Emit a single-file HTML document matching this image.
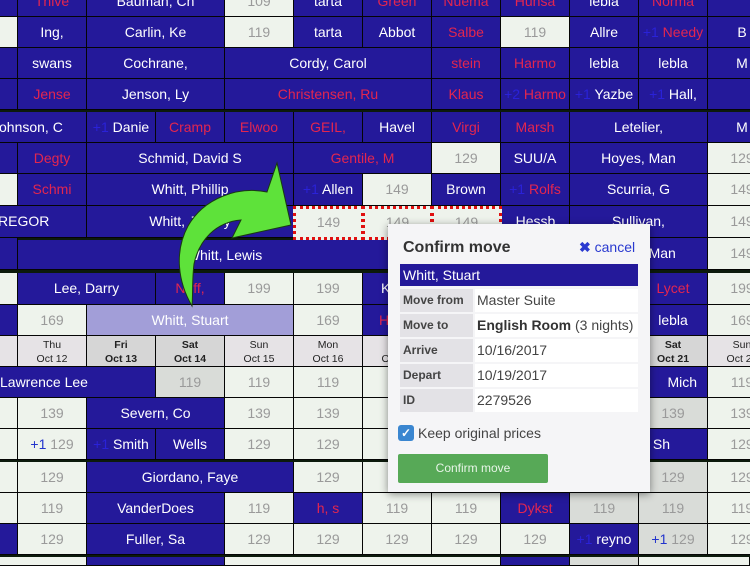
<!DOCTYPE html>
<html style="overflow:hidden;height:566px"><head><meta charset="utf-8"><style>
body{margin:0;width:750px;height:566px;overflow:hidden;background:#0c1a0c;position:relative;font-family:"Liberation Sans",Arial,sans-serif}
.c{position:absolute;height:31px;box-sizing:border-box;border-right:1px solid #050505;border-bottom:1px solid #050505;text-align:center;line-height:30px;font-size:14px;white-space:nowrap;overflow:hidden}
.b{background:#24199a;color:#fff}
.l{background:#eef3ec;color:#9a9a9a}
.g{background:#d9dcd8;color:#9a9a9a}
.p{background:#a29ed8;color:#fff}
.r{color:#e3264f}
.h{background:#e6e3e6;color:#222;font-size:10.5px;line-height:14px;padding-top:2px}
.hd{background:#d6d6d6}
.pl{color:#2a22d8}
.pp{color:#2233cc}
.sel{border:3px dotted #e01010;line-height:26px}
</style></head><body>
<!-- row0 -->
<div class="c b r" style="left:-51px;top:-14px;width:69px">m</div>
<div class="c b r" style="left:18px;top:-14px;width:69px">Thive</div>
<div class="c b" style="left:87px;top:-14px;width:138px">Bauman, Ch</div>
<div class="c l" style="left:225px;top:-14px;width:69px">109</div>
<div class="c b" style="left:294px;top:-14px;width:69px">tarta</div>
<div class="c b r" style="left:363px;top:-14px;width:69px">Green</div>
<div class="c b r" style="left:432px;top:-14px;width:69px">Nuema</div>
<div class="c b r" style="left:501px;top:-14px;width:69px">Hunsa</div>
<div class="c b" style="left:570px;top:-14px;width:69px">lebla</div>
<div class="c b r" style="left:639px;top:-14px;width:69px">Norma</div>
<div class="c b" style="left:708px;top:-14px;width:69px"></div>
<!-- row1 -->
<div class="c l" style="left:-51px;top:17px;width:69px"></div>
<div class="c b" style="left:18px;top:17px;width:69px">Ing,</div>
<div class="c b" style="left:87px;top:17px;width:138px">Carlin, Ke</div>
<div class="c l" style="left:225px;top:17px;width:69px">119</div>
<div class="c b" style="left:294px;top:17px;width:69px">tarta</div>
<div class="c b" style="left:363px;top:17px;width:69px">Abbot</div>
<div class="c b r" style="left:432px;top:17px;width:69px">Salbe</div>
<div class="c l" style="left:501px;top:17px;width:69px">119</div>
<div class="c b" style="left:570px;top:17px;width:69px">Allre</div>
<div class="c b r" style="left:639px;top:17px;width:69px"><span class="pl">+1</span> Needy</div>
<div class="c b" style="left:708px;top:17px;width:69px">B</div>
<!-- row2 -->
<div class="c b" style="left:-51px;top:48px;width:69px"></div>
<div class="c b" style="left:18px;top:48px;width:69px">swans</div>
<div class="c b" style="left:87px;top:48px;width:138px">Cochrane,</div>
<div class="c b" style="left:225px;top:48px;width:207px">Cordy, Carol</div>
<div class="c b r" style="left:432px;top:48px;width:69px">stein</div>
<div class="c b r" style="left:501px;top:48px;width:69px">Harmo</div>
<div class="c b" style="left:570px;top:48px;width:69px">lebla</div>
<div class="c b" style="left:639px;top:48px;width:69px">lebla</div>
<div class="c b" style="left:708px;top:48px;width:69px">M</div>
<!-- row3 -->
<div class="c b" style="left:-51px;top:79px;width:69px"></div>
<div class="c b r" style="left:18px;top:79px;width:69px">Jense</div>
<div class="c b" style="left:87px;top:79px;width:138px">Jenson, Ly</div>
<div class="c b r" style="left:225px;top:79px;width:207px">Christensen, Ru</div>
<div class="c b r" style="left:432px;top:79px;width:69px">Klaus</div>
<div class="c b r" style="left:501px;top:79px;width:69px"><span class="pl">+2</span> Harmo</div>
<div class="c b" style="left:570px;top:79px;width:69px"><span class="pl">+1</span> Yazbe</div>
<div class="c b" style="left:639px;top:79px;width:69px"><span class="pl">+1</span> Hall,</div>
<div class="c b" style="left:708px;top:79px;width:69px"></div>
<!-- row4 -->
<div class="c b" style="left:-51px;top:112px;width:138px;text-align:left;padding-left:43px">Johnson, C</div>
<div class="c b" style="left:87px;top:112px;width:69px"><span class="pl">+1</span> Danie</div>
<div class="c b r" style="left:156px;top:112px;width:69px">Cramp</div>
<div class="c b r" style="left:225px;top:112px;width:69px">Elwoo</div>
<div class="c b r" style="left:294px;top:112px;width:69px">GEIL,</div>
<div class="c b" style="left:363px;top:112px;width:69px">Havel</div>
<div class="c b r" style="left:432px;top:112px;width:69px">Virgi</div>
<div class="c b r" style="left:501px;top:112px;width:69px">Marsh</div>
<div class="c b" style="left:570px;top:112px;width:138px">Letelier,</div>
<div class="c b" style="left:708px;top:112px;width:69px">M</div>
<!-- row5 -->
<div class="c b" style="left:-51px;top:143px;width:69px"></div>
<div class="c b r" style="left:18px;top:143px;width:69px">Degty</div>
<div class="c b" style="left:87px;top:143px;width:207px">Schmid, David S</div>
<div class="c b r" style="left:294px;top:143px;width:138px">Gentile, M</div>
<div class="c l" style="left:432px;top:143px;width:69px">129</div>
<div class="c b" style="left:501px;top:143px;width:69px">SUU/A</div>
<div class="c b" style="left:570px;top:143px;width:138px">Hoyes, Man</div>
<div class="c l" style="left:708px;top:143px;width:69px">129</div>
<!-- row6 -->
<div class="c l" style="left:-51px;top:174px;width:69px;height:32px"></div>
<div class="c b r" style="left:18px;top:174px;width:69px;height:32px">Schmi</div>
<div class="c b" style="left:87px;top:174px;width:207px;height:32px">Whitt, Phillip</div>
<div class="c b" style="left:294px;top:174px;width:69px;height:32px"><span class="pl">+1</span> Allen</div>
<div class="c l" style="left:363px;top:174px;width:69px;height:32px">149</div>
<div class="c b" style="left:432px;top:174px;width:69px;height:32px">Brown</div>
<div class="c b r" style="left:501px;top:174px;width:69px;height:32px"><span class="pl">+1</span> Rolfs</div>
<div class="c b" style="left:570px;top:174px;width:138px;height:32px">Scurria, G</div>
<div class="c l" style="left:708px;top:174px;width:69px;height:32px">149</div>
<!-- row7 -->
<div class="c b" style="left:-51px;top:206px;width:138px;height:32px;text-align:left;padding-left:49px">REGOR</div>
<div class="c b" style="left:87px;top:206px;width:207px;height:32px">Whitt, Jeffrey</div>
<div class="c l sel" style="left:293px;top:206px;width:71px;height:34px">149</div>
<div class="c l sel" style="left:362px;top:206px;width:71px;height:34px">149</div>
<div class="c l sel" style="left:431px;top:206px;width:71px;height:34px">149</div>
<div class="c b" style="left:502px;top:206px;width:68px;height:32px">Hessb</div>
<div class="c b" style="left:570px;top:206px;width:138px;height:32px">Sullivan,</div>
<div class="c l" style="left:708px;top:206px;width:69px;height:32px">149</div>
<!-- row8 -->
<div class="c b" style="left:-51px;top:238px;width:69px;height:32px"></div>
<div class="c b" style="left:18px;top:240px;width:414px;height:30px">Whitt, Lewis</div>
<div class="c b" style="left:432px;top:240px;width:138px;height:30px"></div>
<div class="c b" style="left:570px;top:238px;width:138px;height:32px">Hoyes, Man</div>
<div class="c l" style="left:708px;top:238px;width:69px;height:32px">149</div>
<!-- row9 -->
<div class="c l" style="left:-51px;top:273px;width:69px;height:32px"></div>
<div class="c b" style="left:18px;top:273px;width:138px;height:32px">Lee, Darry</div>
<div class="c b r" style="left:156px;top:273px;width:69px;height:32px">Neff,</div>
<div class="c l" style="left:225px;top:273px;width:69px;height:32px">199</div>
<div class="c l" style="left:294px;top:273px;width:69px;height:32px">199</div>
<div class="c b" style="left:363px;top:273px;width:69px;height:32px;text-align:left;padding-left:18px">K</div>
<div class="c b" style="left:432px;top:273px;width:207px;height:32px"></div>
<div class="c b r" style="left:639px;top:273px;width:69px;height:32px">Lycet</div>
<div class="c l" style="left:708px;top:273px;width:69px;height:32px">199</div>
<!-- row10 -->
<div class="c b" style="left:-51px;top:305px;width:69px"></div>
<div class="c l" style="left:18px;top:305px;width:69px">169</div>
<div class="c p" style="left:87px;top:305px;width:207px">Whitt, Stuart</div>
<div class="c l" style="left:294px;top:305px;width:69px">169</div>
<div class="c b r" style="left:363px;top:305px;width:69px;text-align:left;padding-left:16px">H</div>
<div class="c b" style="left:432px;top:305px;width:207px"></div>
<div class="c b" style="left:639px;top:305px;width:69px">lebla</div>
<div class="c l" style="left:708px;top:305px;width:69px">169</div>
<!-- header -->
<div class="c h" style="left:-51px;top:336px;width:69px"></div>
<div class="c h" style="left:18px;top:336px;width:69px">Thu<br>Oct 12</div>
<div class="c h hd" style="left:87px;top:336px;width:69px"><b>Fri<br>Oct 13</b></div>
<div class="c h hd" style="left:156px;top:336px;width:69px"><b>Sat<br>Oct 14</b></div>
<div class="c h" style="left:225px;top:336px;width:69px">Sun<br>Oct 15</div>
<div class="c h" style="left:294px;top:336px;width:69px">Mon<br>Oct 16</div>
<div class="c h" style="left:363px;top:336px;width:69px">Tue<br>Oct 17</div>
<div class="c h" style="left:432px;top:336px;width:69px">Wed<br>Oct 18</div>
<div class="c h" style="left:501px;top:336px;width:69px">Thu<br>Oct 19</div>
<div class="c h hd" style="left:570px;top:336px;width:69px"><b>Fri<br>Oct 20</b></div>
<div class="c h hd" style="left:639px;top:336px;width:69px"><b>Sat<br>Oct 21</b></div>
<div class="c h" style="left:708px;top:336px;width:69px">Sun<br>Oct 22</div>
<!-- row11 -->
<div class="c b" style="left:-51px;top:367px;width:207px;text-align:left;padding-left:51px">Lawrence Lee</div>
<div class="c g" style="left:156px;top:367px;width:69px">119</div>
<div class="c l" style="left:225px;top:367px;width:69px">119</div>
<div class="c l" style="left:294px;top:367px;width:69px">119</div>
<div class="c l" style="left:363px;top:367px;width:207px">119</div>
<div class="c b" style="left:570px;top:367px;width:138px;text-align:right;padding-right:10px">Mich</div>
<div class="c l" style="left:708px;top:367px;width:69px">119</div>
<!-- row12 -->
<div class="c l" style="left:-51px;top:398px;width:69px"></div>
<div class="c l" style="left:18px;top:398px;width:69px">139</div>
<div class="c b" style="left:87px;top:398px;width:138px">Severn, Co</div>
<div class="c l" style="left:225px;top:398px;width:69px">139</div>
<div class="c l" style="left:294px;top:398px;width:69px">139</div>
<div class="c l" style="left:363px;top:398px;width:276px"></div>
<div class="c g" style="left:639px;top:398px;width:69px">139</div>
<div class="c l" style="left:708px;top:398px;width:69px">139</div>
<!-- row13 -->
<div class="c l" style="left:-51px;top:429px;width:69px"></div>
<div class="c l" style="left:18px;top:429px;width:69px"><span class="pp">+1</span> 129</div>
<div class="c b" style="left:87px;top:429px;width:69px"><span class="pl">+1</span> Smith</div>
<div class="c b" style="left:156px;top:429px;width:69px">Wells</div>
<div class="c l" style="left:225px;top:429px;width:69px">129</div>
<div class="c l" style="left:294px;top:429px;width:69px">129</div>
<div class="c l" style="left:363px;top:429px;width:207px"></div>
<div class="c b" style="left:570px;top:429px;width:138px;text-align:right;padding-right:37px">Sh</div>
<div class="c l" style="left:708px;top:429px;width:69px">129</div>
<!-- row14 -->
<div class="c l" style="left:-51px;top:462px;width:69px"></div>
<div class="c l" style="left:18px;top:462px;width:69px">129</div>
<div class="c b" style="left:87px;top:462px;width:207px">Giordano, Faye</div>
<div class="c l" style="left:294px;top:462px;width:69px">129</div>
<div class="c l" style="left:363px;top:462px;width:276px"></div>
<div class="c g" style="left:639px;top:462px;width:69px">129</div>
<div class="c l" style="left:708px;top:462px;width:69px">129</div>
<!-- row15 -->
<div class="c l" style="left:-51px;top:493px;width:69px"></div>
<div class="c l" style="left:18px;top:493px;width:69px">119</div>
<div class="c b" style="left:87px;top:493px;width:138px">VanderDoes</div>
<div class="c l" style="left:225px;top:493px;width:69px">119</div>
<div class="c b r" style="left:294px;top:493px;width:69px">h, s</div>
<div class="c l" style="left:363px;top:493px;width:69px">119</div>
<div class="c l" style="left:432px;top:493px;width:69px">119</div>
<div class="c b r" style="left:501px;top:493px;width:69px">Dykst</div>
<div class="c g" style="left:570px;top:493px;width:69px">119</div>
<div class="c g" style="left:639px;top:493px;width:69px">119</div>
<div class="c l" style="left:708px;top:493px;width:69px">119</div>
<!-- row16 -->
<div class="c b" style="left:-51px;top:524px;width:69px"></div>
<div class="c l" style="left:18px;top:524px;width:69px">129</div>
<div class="c b" style="left:87px;top:524px;width:138px">Fuller, Sa</div>
<div class="c l" style="left:225px;top:524px;width:69px">129</div>
<div class="c l" style="left:294px;top:524px;width:69px">129</div>
<div class="c l" style="left:363px;top:524px;width:69px">129</div>
<div class="c l" style="left:432px;top:524px;width:69px">129</div>
<div class="c l" style="left:501px;top:524px;width:69px">129</div>
<div class="c b" style="left:570px;top:524px;width:69px"><span class="pl">+1</span> reyno</div>
<div class="c g" style="left:639px;top:524px;width:69px"><span class="pp">+1</span> 129</div>
<div class="c l" style="left:708px;top:524px;width:69px">129</div>
<!-- row17 -->
<div class="c l" style="left:-51px;top:557px;width:138px;height:9px"></div>
<div class="c b" style="left:87px;top:557px;width:138px;height:9px"></div>
<div class="c l" style="left:225px;top:557px;width:276px;height:9px"></div>
<div class="c b" style="left:501px;top:557px;width:69px;height:9px"></div>
<div class="c g" style="left:570px;top:557px;width:69px;height:9px"></div>
<div class="c l" style="left:639px;top:557px;width:111px;height:9px"></div>

<!-- arrow -->
<svg style="position:absolute;left:0;top:0" width="750" height="566">
<path d="M192,306 C178,282 174,252 188,226 C204,198 238,186 267,192 L277,163 L291,225 L232,238 L241,220 C216,222 199,240 194,264 C192,280 193,295 192,306 Z" fill="#5ee23a" stroke="#1a3a10" stroke-width="1"/>
</svg>

<!-- popup -->
<div style="position:absolute;left:388px;top:224px;width:262px;height:268px;background:#f5f5f7;box-shadow:0 2px 8px rgba(0,0,0,.45);font-family:'Liberation Sans',Arial,sans-serif">
 <div style="position:absolute;left:15px;top:15px;font-size:16px;font-weight:bold;color:#333">Confirm move</div>
 <div style="position:absolute;left:191px;top:15px;font-size:14px;color:#2a3ad0"><b>✖</b> cancel</div>
 <div style="position:absolute;left:12px;top:40px;width:238px;height:22px;background:#24199a;color:#fff;font-size:14px;line-height:22px;padding-left:3px;box-sizing:border-box">Whitt, Stuart</div>
 <div style="position:absolute;left:12px;top:65px;width:238px;font-size:14px">
  <div style="display:flex;height:25px"><div style="width:70px;background:#e3e2e6;font-weight:bold;color:#444;font-size:12px;line-height:23px;padding-left:3px;margin-right:2px;margin-bottom:2px">Move from</div><div style="flex:1;background:#fff;color:#444;line-height:23px;padding-left:2px;margin-bottom:2px">Master Suite</div></div>
  <div style="display:flex;height:25px"><div style="width:70px;background:#e3e2e6;font-weight:bold;color:#444;font-size:12px;line-height:23px;padding-left:3px;margin-right:2px;margin-bottom:2px">Move to</div><div style="flex:1;background:#fff;color:#444;line-height:23px;padding-left:2px;margin-bottom:2px;white-space:nowrap"><b style="color:#333">English Room</b> (3 nights)</div></div>
  <div style="display:flex;height:25px"><div style="width:70px;background:#e3e2e6;font-weight:bold;color:#444;font-size:12px;line-height:23px;padding-left:3px;margin-right:2px;margin-bottom:2px">Arrive</div><div style="flex:1;background:#fff;color:#444;line-height:23px;padding-left:2px;margin-bottom:2px">10/16/2017</div></div>
  <div style="display:flex;height:25px"><div style="width:70px;background:#e3e2e6;font-weight:bold;color:#444;font-size:12px;line-height:23px;padding-left:3px;margin-right:2px;margin-bottom:2px">Depart</div><div style="flex:1;background:#fff;color:#444;line-height:23px;padding-left:2px;margin-bottom:2px">10/19/2017</div></div>
  <div style="display:flex;height:25px"><div style="width:70px;background:#e3e2e6;font-weight:bold;color:#444;font-size:12px;line-height:23px;padding-left:3px;margin-right:2px;margin-bottom:2px">ID</div><div style="flex:1;background:#fff;color:#444;line-height:23px;padding-left:2px;margin-bottom:2px">2279526</div></div>
 </div>
 <div style="position:absolute;left:10px;top:201px;width:16px;height:16px;background:#3a86d0;border-radius:3px;color:#fff;font-size:12px;line-height:16px;text-align:center;font-weight:bold">✓</div>
 <div style="position:absolute;left:30px;top:201px;font-size:14px;color:#444">Keep original prices</div>
 <div style="position:absolute;left:10px;top:230px;width:150px;height:29px;background:#57a957;border-radius:2px;color:#e8f5e8;font-size:12px;line-height:29px;text-align:center">Confirm move</div>
</div>
</body></html>
